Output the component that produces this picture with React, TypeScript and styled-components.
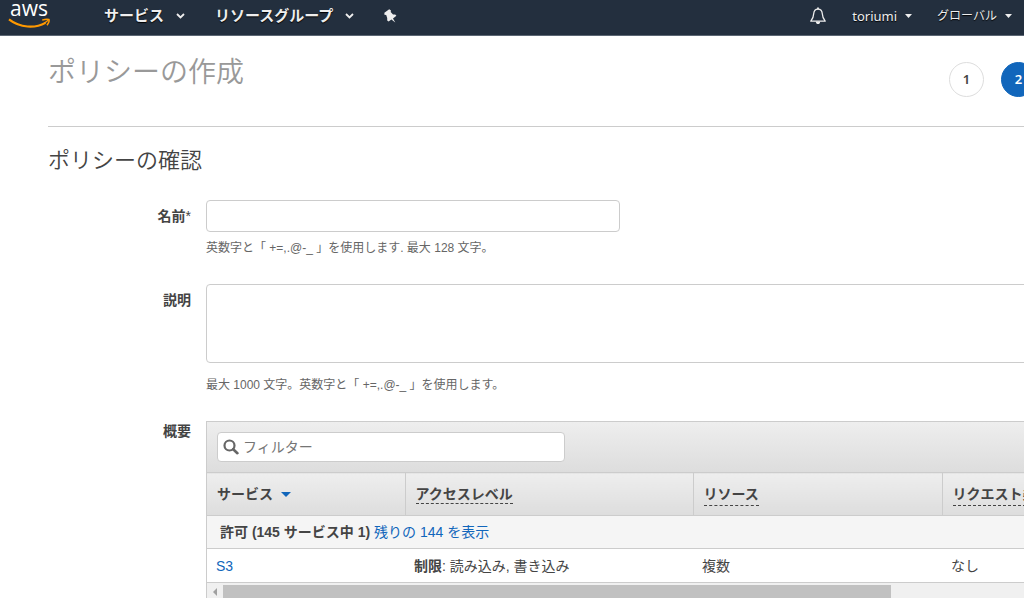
import React from "react";
import styled, { createGlobalStyle } from "styled-components";

const GlobalStyle = createGlobalStyle`
  * { box-sizing: border-box; }
  body {
    margin: 0;
    background: #fff;
    color: #444;
    font-family: "Liberation Sans", "Noto Sans CJK JP", sans-serif;
    font-size: 14px;
    line-height: 20px;
    overflow-x: hidden;
  }
  button, input, textarea { font: inherit; color: inherit; }
  a { color: #1166bb; text-decoration: none; }
`;

const Page = styled.div`
  overflow: hidden;
`;

const NavBar = styled.header`
  display: flex;
  align-items: center;
  height: 36px;
  padding: 0 12px 4px 8px;
  background: #232f3e;
  border-bottom: 1px solid #5b6673;
`;

const LogoLink = styled.a`
  display: flex;
  width: 96px;
`;

const NavMenus = styled.nav`
  display: flex;
  align-items: center;
  gap: 30px;
  flex: 1;
`;

const NavButton = styled.button<{ $small?: boolean }>`
  display: flex;
  align-items: center;
  gap: ${(p) => (p.$small ? 8 : 12)}px;
  padding: 0;
  border: 0;
  background: none;
  color: #eee;
  font-size: ${(p) => (p.$small ? 12 : 15)}px;
  font-weight: ${(p) => (p.$small ? 400 : 700)};
  line-height: 20px;
  text-shadow: 0 1px 1px #000;
  white-space: nowrap;
`;

const UserName = styled.span`
  font-family: "Noto Sans", sans-serif;
  font-size: 13px;
`;

const Account = styled.div`
  display: flex;
  align-items: center;
  gap: 25px;
`;

const Main = styled.main`
  margin: 0 -24px 0 48px;
`;

const TitleRow = styled.div`
  display: flex;
  justify-content: space-between;
  align-items: center;
  height: 91px;
  border-bottom: 1px solid #ccc;
`;

const Title = styled.h1`
  margin: 0 0 16px;
  color: #999;
  font-size: 28px;
  font-weight: 350;
  line-height: 36px;
`;

const Steps = styled.ol`
  display: flex;
  gap: 17px;
  margin: 0 12px 4px 0;
  padding: 0;
  list-style: none;
`;

const Step = styled.li<{ $active?: boolean }>`
  display: grid;
  place-items: center;
  width: 35px;
  height: 35px;
  border: 1px solid ${(p) => (p.$active ? "#1166bb" : "#ddd")};
  border-radius: 50%;
  background: ${(p) => (p.$active ? "#1166bb" : "#fff")};
  color: ${(p) => (p.$active ? "#fff" : "#444")};
  font-family: "Noto Sans", sans-serif;
  font-size: 13px;
  font-weight: 600;
`;

const Subtitle = styled.h2`
  margin: 18px 0 23px;
  color: #444;
  font-size: 22px;
  font-weight: 350;
  line-height: 32px;
`;

const Form = styled.form`
  display: grid;
  gap: 26px;
`;

const Field = styled.div`
  display: grid;
  grid-template-columns: 143px minmax(0, 1fr);
  column-gap: 15px;
`;

const Label = styled.label<{ $flush?: boolean }>`
  padding-top: ${(p) => (p.$flush ? 0 : 6)}px;
  text-align: right;
  font-weight: 700;
`;

const Required = styled.span`
  font-weight: 400;
`;

const TextInput = styled.input`
  display: block;
  width: 414px;
  max-width: 100%;
  height: 32px;
  padding: 4px 10px;
  border: 1px solid #ccc;
  border-radius: 4px;
  background: #fff;
`;

const TextArea = styled.textarea`
  display: block;
  width: 100%;
  height: 79px;
  padding: 4px 10px;
  border: 1px solid #ccc;
  border-radius: 4px;
  background: #fff;
  resize: none;
`;

const Hint = styled.p<{ $spaced?: boolean }>`
  margin: ${(p) => (p.$spaced ? 12 : 6)}px 0 0;
  color: #666;
  font-size: 12px;
  line-height: 20px;
`;

const Panel = styled.div`
  border: 1px solid #ccc;
  border-bottom: 0;
`;

const Toolbar = styled.div`
  padding: 10px;
  background: linear-gradient(#eee, #ddd);
`;

const Filter = styled.label`
  display: flex;
  align-items: center;
  gap: 4px;
  width: 348px;
  height: 30px;
  padding: 0 5px;
  border: 1px solid #ccc;
  border-radius: 4px;
  background: #fff;
`;

const FilterInput = styled.input`
  flex: 1;
  min-width: 0;
  padding: 0;
  border: 0;
  outline: 0;
  background: none;
  &::placeholder { color: #757575; opacity: 1; }
`;

const Table = styled.table`
  width: 100%;
  table-layout: fixed;
  border-collapse: collapse;
`;

const Col = styled.col<{ $width?: number }>`
  width: ${(p) => (p.$width ? `${p.$width}px` : "auto")};
`;

const HeadCell = styled.th`
  height: 43px;
  padding: 0 10px;
  border-top: 1px solid #ccc;
  border-bottom: 1px solid #ccc;
  background: linear-gradient(#eee, #ddd);
  text-align: left;
  white-space: nowrap;
  & + & { border-left: 1px solid #ccc; }
`;

const SortButton = styled.button`
  display: flex;
  align-items: center;
  gap: 8px;
  padding: 0;
  border: 0;
  background: none;
  font-weight: 700;
`;

const Term = styled.span<{ $low?: boolean }>`
  display: inline-block;
  padding-top: ${(p) => (p.$low ? 2 : 0)}px;
  padding-bottom: ${(p) => (p.$low ? 2 : 0)}px;
  border-bottom: 1px dashed #444;
  line-height: 18px;
`;

const GroupCell = styled.td`
  height: 33px;
  padding: 0 13px;
  border-bottom: 1px solid #ccc;
  background: #f5f5f5;
`;

const Cell = styled.td`
  height: 34px;
  padding: 0 9px;
  border-bottom: 1px solid #ccc;
`;

const ScrollTrack = styled.div`
  display: flex;
  align-items: flex-end;
  height: 15px;
  background: #f0f0f0;
`;

const ScrollArrow = styled.div`
  display: grid;
  place-items: center;
  width: 16px;
  height: 13px;
`;

const ScrollThumb = styled.div`
  width: 668px;
  height: 13px;
  background: #c1c1c1;
`;

const Logo = () => (
  <svg width="44" height="31" viewBox="0 0 44 31" role="img" aria-label="aws">
    <text x="2" y="16" fill="#fff" fontFamily="Open Sans, sans-serif" fontSize="21" fontWeight="500">aws</text>
    <path d="M1 19.4C12 28 27 28.6 37.5 22.9" fill="none" stroke="#f90" strokeWidth="2.2" />
    <path d="M34.2 20.1C36.8 19.2 39.6 19 41 19.5C41.4 20.8 40.4 23.4 39 25.2" fill="none" stroke="#f90" strokeWidth="1.5" />
    <path d="M36 23.6L40.4 20" stroke="#f90" strokeWidth="1.3" />
  </svg>
);

const Chevron = () => (
  <svg width="9" height="6" viewBox="0 0 9 6" aria-hidden="true">
    <path d="M1 1L4.5 4.5L8 1" fill="none" stroke="#eee" strokeWidth="1.8" />
  </svg>
);

const Caret = ({ color = "#eee", width = 7, height = 4 }) => (
  <svg width={width} height={height} viewBox="0 0 8 4" preserveAspectRatio="none" aria-hidden="true">
    <path d="M0 0H8L4 4Z" fill={color} />
  </svg>
);

const Pin = () => (
  <svg width="13" height="14" viewBox="0 0 13 14" aria-hidden="true">
    <path d="M5.2 0.3L7 1.5L6.7 3L9 5.4L11.2 5.4L12.4 6.8L9 9.4L11.3 13.5L7.4 10.5L4.6 12.6L3.2 11.6L3.2 9L2.2 6L0.4 5.8L0.4 3.8Z" fill="#eee" />
  </svg>
);

const Bell = () => (
  <svg width="18" height="18" viewBox="0 0 18 18" aria-hidden="true">
    <path d="M9 2.2C6.2 2.2 4.9 4.2 4.7 6.8C4.6 9.5 4 11.6 1.8 14.2H16.2C14 11.6 13.4 9.5 13.3 6.8C13.1 4.2 11.8 2.2 9 2.2Z" fill="none" stroke="#eee" strokeWidth="1.3" strokeLinejoin="round" />
    <path d="M9 0.6V2.2" stroke="#eee" strokeWidth="1.8" />
    <path d="M6.8 14.4H11.2C11 16.2 10.2 17 9 17S7 16.2 6.8 14.4Z" fill="#eee" />
  </svg>
);

const SearchIcon = () => (
  <svg width="16" height="16" viewBox="0 0 16 16" aria-hidden="true">
    <circle cx="6.5" cy="6.5" r="5" fill="none" stroke="#666" strokeWidth="2.2" />
    <path d="M10.2 10.2L14.4 14.2" stroke="#666" strokeWidth="2.6" strokeLinecap="round" />
  </svg>
);

export default function App() {
  return (
    <Page>
      <GlobalStyle />
      <NavBar>
        <LogoLink href="#"><Logo /></LogoLink>
        <NavMenus>
          <NavButton type="button">サービス<Chevron /></NavButton>
          <NavButton type="button">リソースグループ<Chevron /></NavButton>
          <NavButton type="button" aria-label="ピン"><Pin /></NavButton>
        </NavMenus>
        <Account>
          <NavButton type="button" aria-label="通知"><Bell /></NavButton>
          <NavButton type="button" $small><UserName>toriumi</UserName><Caret /></NavButton>
          <NavButton type="button" $small>グローバル<Caret /></NavButton>
        </Account>
      </NavBar>

      <Main>
        <TitleRow>
          <Title>ポリシーの作成</Title>
          <Steps>
            <Step>1</Step>
            <Step $active aria-current="step">2</Step>
          </Steps>
        </TitleRow>

        <Subtitle>ポリシーの確認</Subtitle>

        <Form>
          <Field>
            <Label htmlFor="name">名前<Required>*</Required></Label>
            <div>
              <TextInput id="name" type="text" />
              <Hint>英数字と「 +=,.@-_ 」を使用します. 最大 128 文字。</Hint>
            </div>
          </Field>

          <Field>
            <Label htmlFor="description">説明</Label>
            <div>
              <TextArea id="description" />
              <Hint $spaced>最大 1000 文字。英数字と「 +=,.@-_ 」を使用します。</Hint>
            </div>
          </Field>

          <Field>
            <Label as="div" $flush>概要</Label>
            <Panel>
              <Toolbar>
                <Filter>
                  <SearchIcon />
                  <FilterInput type="text" placeholder="フィルター" aria-label="フィルター" />
                </Filter>
              </Toolbar>
              <Table>
                <colgroup>
                  <Col $width={198} />
                  <Col $width={288} />
                  <Col $width={249} />
                  <Col />
                </colgroup>
                <thead>
                  <tr>
                    <HeadCell scope="col">
                      <SortButton type="button">サービス<Caret color="#1166bb" width={10} height={5} /></SortButton>
                    </HeadCell>
                    <HeadCell scope="col"><Term>アクセスレベル</Term></HeadCell>
                    <HeadCell scope="col"><Term $low>リソース</Term></HeadCell>
                    <HeadCell scope="col"><Term $low>リクエスト条件</Term></HeadCell>
                  </tr>
                </thead>
                <tbody>
                  <tr>
                    <GroupCell colSpan={4}>
                      <strong>許可 (145 サービス中 1)</strong> <a href="#remaining">残りの 144 を表示</a>
                    </GroupCell>
                  </tr>
                  <tr>
                    <Cell><a href="#s3">S3</a></Cell>
                    <Cell><strong>制限</strong>: 読み込み, 書き込み</Cell>
                    <Cell>複数</Cell>
                    <Cell>なし</Cell>
                  </tr>
                </tbody>
              </Table>
              <ScrollTrack>
                <ScrollArrow>
                  <svg width="4" height="8" viewBox="0 0 4 8" aria-hidden="true">
                    <path d="M4 0V8L0 4Z" fill="#a0a0a0" />
                  </svg>
                </ScrollArrow>
                <ScrollThumb />
              </ScrollTrack>
            </Panel>
          </Field>
        </Form>
      </Main>
    </Page>
  );
}
